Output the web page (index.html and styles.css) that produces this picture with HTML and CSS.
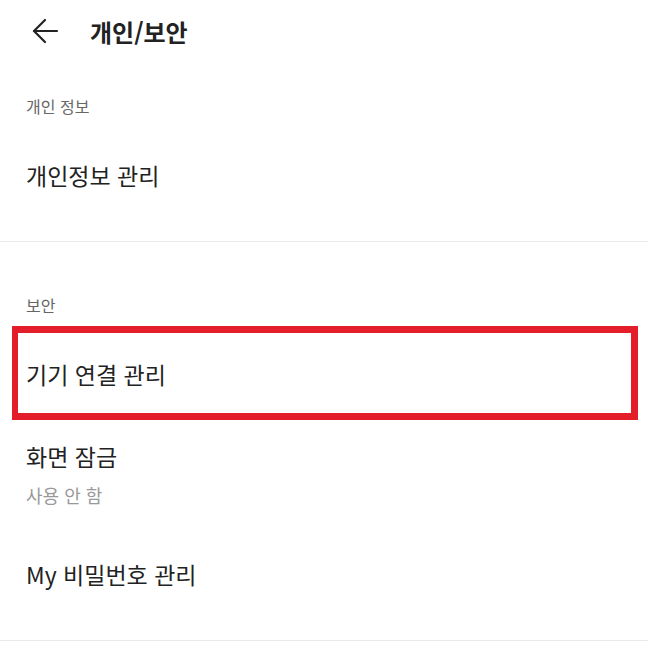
FILE: index.html
```html
<!DOCTYPE html>
<html lang="ko">
<head>
    <meta charset="UTF-8">
    <meta name="viewport" content="width=device-width, initial-scale=1.0">
    <title>개인/보안</title>
    <link rel="stylesheet" href="styles.css">
</head>
<body>
    <header class="top-bar">
        <button class="back-btn" aria-label="뒤로">
            <svg width="28" height="28" viewBox="0 0 28 28" fill="none" stroke="#222" stroke-width="2.2" stroke-linecap="round" stroke-linejoin="round">
                <path d="M3 14H26"/>
                <path d="M14 3L3 14L14 25"/>
            </svg>
        </button>
        <h1 class="title">개인/보안</h1>
    </header>

    <section class="group">
        <p class="group-label">개인 정보</p>
        <div class="item">
            <span class="item-title">개인정보 관리</span>
        </div>
    </section>

    <section class="group">
        <p class="group-label">보안</p>
        <div class="item highlight">
            <span class="item-title">기기 연결 관리</span>
        </div>
        <div class="item item-two-line">
            <span class="item-title">화면 잠금</span>
            <span class="item-sub">사용 안 함</span>
        </div>
        <div class="item">
            <span class="item-title">My 비밀번호 관리</span>
        </div>
    </section>
</body>
</html>
```

FILE: styles.css
```css
body {
    margin: 0;
    background: #fff;
    color: #222;
    font-family: "Noto Sans CJK KR", "Noto Sans", sans-serif;
}

.top-bar {
    height: 62px;
    display: flex;
    align-items: center;
    padding-left: 31px;
}

.back-btn {
    flex: none;
    background: none;
    border: none;
    padding: 0;
    width: 28px;
    height: 28px;
    display: flex;
}

.title {
    margin: 0 0 0 31px;
    font-size: 24px;
    font-weight: 700;
    color: #222;
}

.group {
    border-bottom: 1px solid #e9e9e9;
    padding-bottom: 21px;
}

.group-label {
    margin: 20px 0 0;
    height: 48px;
    line-height: 48px;
    padding-left: 26px;
    font-size: 16px;
    color: #666;
}

.group + .group .group-label {
    margin-top: 39px;
}

.item {
    height: 90px;
    display: flex;
    flex-direction: column;
    justify-content: center;
    padding-left: 26px;
    position: relative;
}

.item-title {
    font-size: 23px;
    line-height: 32px;
    color: #222;
}

.item-two-line {
    height: auto;
    padding-top: 21px;
    padding-bottom: 21px;
    gap: 10px;
}

.item-sub {
    font-size: 18px;
    line-height: 26px;
    color: #999;
}

.highlight::after {
    content: "";
    position: absolute;
    left: 12px;
    right: 10px;
    top: -3px;
    bottom: -1px;
    border: 7px solid #e41d2b;
    border-left-width: 6px;
}
```
